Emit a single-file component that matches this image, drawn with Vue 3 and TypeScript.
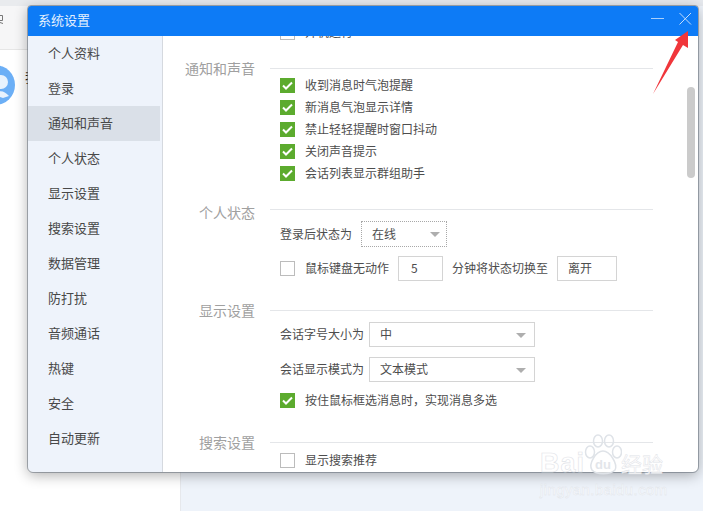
<script setup lang="ts">
const navItems: string[] = [
  '个人资料', '登录', '通知和声音', '个人状态', '显示设置', '搜索设置',
  '数据管理', '防打扰', '音频通话', '热键', '安全', '自动更新',
]
const activeNav = '通知和声音'

const notifyOptions: string[] = [
  '收到消息时气泡提醒',
  '新消息气泡显示详情',
  '禁止轻轻提醒时窗口抖动',
  '关闭声音提示',
  '会话列表显示群组助手',
]
</script>

<template>
  <div class="page">
    <!-- 背后的主窗口 -->
    <div class="back-left">
      <div class="back-top"></div>
      <div class="back-search">
        <svg class="back-search-icon" width="4" height="10" viewBox="0 0 4 10">
          <path d="M0 1.5H2.5V6.5H0M0 8.5L3 9.5" stroke="#777" stroke-width="1" fill="none" />
        </svg>
      </div>
      <div class="back-contact">
        <svg class="back-avatar" width="20" height="40" viewBox="0 0 20 40">
          <circle cx="-5" cy="20" r="20" fill="#6caff6" />
          <circle cx="1" cy="17" r="7" fill="#e8f2fd" />
          <path d="M-6 30 Q1 22 9 31 L3 33 Z" fill="#e8f2fd" />
        </svg>
        <span class="back-name">我</span>
      </div>
    </div>
    <div class="back-right">
      <div class="back-right-top"></div>
    </div>

    <!-- 系统设置窗口 -->
    <div class="window">
      <div class="titlebar">
        <span class="title">系统设置</span>
        <svg class="title-icons" width="42" height="14" viewBox="0 0 42 14">
          <path d="M0 6.5H13" stroke="#a9cffb" stroke-width="1" fill="none" />
          <path d="M28.5 1L40 12.5M40 1L28.5 12.5" stroke="#c3dcfb" stroke-width="1" fill="none" />
        </svg>
      </div>
      <div class="body">
        <aside class="sidebar">
          <div
            v-for="item in navItems"
            :key="item"
            class="nav-item"
            :class="{ active: item === activeNav }"
          >{{ item }}</div>
        </aside>
        <main class="content">
          <div class="scroll-inner">
            <label class="check-row">
              <span class="box"></span>
              <span class="txt">开机运行</span>
            </label>

            <section class="section sec-notify">
              <div class="sec-head">
                <span class="sec-label">通知和声音</span>
                <span class="sec-rule"></span>
              </div>
              <div class="rows tight">
                <label v-for="opt in notifyOptions" :key="opt" class="check-row">
                  <span class="box checked">
                    <svg width="11" height="9" viewBox="0 0 11 9">
                      <path d="M1 4.5L4 7.5L10 1.5" stroke="#fff" stroke-width="2" fill="none" />
                    </svg>
                  </span>
                  <span class="txt">{{ opt }}</span>
                </label>
              </div>
            </section>

            <section class="section sec-status">
              <div class="sec-head">
                <span class="sec-label">个人状态</span>
                <span class="sec-rule high"></span>
              </div>
              <div class="rows">
                <div class="form-row">
                  <span class="txt">登录后状态为</span>
                  <div class="select dotted small"><span class="txt">在线</span><i class="caret"></i></div>
                </div>
                <div class="form-row second">
                  <span class="box"></span>
                  <span class="txt box-text">鼠标键盘无动作</span>
                  <div class="input num"><span class="txt">5</span></div>
                  <span class="txt">分钟将状态切换至</span>
                  <div class="input away"><span class="txt">离开</span></div>
                </div>
              </div>
            </section>

            <section class="section sec-display">
              <div class="sec-head">
                <span class="sec-label">显示设置</span>
                <span class="sec-rule"></span>
              </div>
              <div class="rows">
                <div class="form-row tight-label">
                  <span class="txt">会话字号大小为</span>
                  <div class="select wide"><span class="txt">中</span><i class="caret"></i></div>
                </div>
                <div class="form-row tight-label second-wide">
                  <span class="txt">会话显示模式为</span>
                  <div class="select wide"><span class="txt">文本模式</span><i class="caret"></i></div>
                </div>
                <label class="check-row after-select">
                  <span class="box checked">
                    <svg width="11" height="9" viewBox="0 0 11 9">
                      <path d="M1 4.5L4 7.5L10 1.5" stroke="#fff" stroke-width="2" fill="none" />
                    </svg>
                  </span>
                  <span class="txt">按住鼠标框选消息时，实现消息多选</span>
                </label>
              </div>
            </section>

            <section class="section sec-search">
              <div class="sec-head">
                <span class="sec-label">搜索设置</span>
                <span class="sec-rule"></span>
              </div>
              <label class="check-row">
                <span class="box"></span>
                <span class="txt">显示搜索推荐</span>
              </label>
            </section>
          </div>
          <div class="scrollbar"></div>
        </main>
      </div>
    </div>

    <!-- 红色箭头标注 -->
    <svg class="arrow" width="40" height="66" viewBox="650 30 40 66">
      <polygon points="688,31 688,48 683,45 653,94 678,42 675,40" fill="#f0363b" />
    </svg>

    <!-- 水印 -->
    <div class="watermark">
      <div class="wm-top">
        <span class="wm-bai">Bai</span>
        <svg class="wm-paw" width="38" height="42" viewBox="0 0 38 42">
          <g fill="none" stroke="#dfe3e8" stroke-width="1.5">
            <ellipse cx="6" cy="18" rx="4.5" ry="6" />
            <ellipse cx="14" cy="7" rx="4.5" ry="6" />
            <ellipse cx="25" cy="7" rx="4.5" ry="6" />
            <ellipse cx="33" cy="18" rx="4.5" ry="6" />
            <path d="M19 17C12 17 4 30 8 36C12 41 26 41 31 36C34 30 26 17 19 17Z" fill="#fff" fill-opacity="0.6" />
          </g>
          <text x="19" y="35" text-anchor="middle" class="wm-du">du</text>
        </svg>
        <span class="wm-cn">经验</span>
      </div>
      <div class="wm-url">jingyan.baidu.com</div>
    </div>
  </div>
</template>

<style>
html,
body {
  margin: 0;
  padding: 0;
  background: #fff;
}
</style>

<style scoped>
.page {
  position: relative;
  display: flex;
  width: 703px;
  height: 511px;
  overflow: hidden;
  font-family: "Noto Sans CJK SC", "Liberation Sans", sans-serif;
  font-size: 12px;
  color: #4d4d4d;
}

/* 背后的主窗口 */
.back-left {
  width: 181px;
  background: #fff;
  border-right: 1px solid #e6e8ec;
  box-sizing: border-box;
}
.back-top {
  height: 6px;
  background: #e9ebee;
}
.back-search {
  height: 44px;
  background: #f6f6f7;
  border-bottom: 1px solid #e6e6e6;
  box-sizing: border-box;
}
.back-search-icon {
  display: block;
  padding-top: 8px;
}
.back-contact {
  display: flex;
  align-items: flex-start;
  padding-top: 15px;
}
.back-avatar {
  flex: none;
  width: 20px;
}
.back-name {
  margin: 2px 0 0 5px;
  font-size: 13px;
  color: #222;
}
.back-right {
  flex: 1;
  background: #eef3fa;
}
.back-right-top {
  height: 6px;
  background: #e6e9ee;
}

/* 设置窗口 */
.window {
  position: absolute;
  left: 28px;
  top: 6px;
  width: 670px;
  height: 466px;
  display: flex;
  flex-direction: column;
  background: #fff;
  border-radius: 3px 3px 5px 5px;
  overflow: hidden;
  outline: 1px solid rgba(100, 110, 120, 0.55);
  box-shadow: 0 3px 14px rgba(0, 0, 0, 0.32);
}
.titlebar {
  flex: none;
  height: 30px;
  background: #0d7bf6;
  display: flex;
  align-items: center;
  justify-content: space-between;
  padding: 0 5px 0 10px;
}
.title {
  margin-top: -4px;
  font-size: 13px;
  color: #e4f0fe;
}
.title-icons {
  margin-top: -5px;
}
.body {
  flex: 1;
  display: flex;
  min-height: 0;
}
.sidebar {
  flex: none;
  width: 135px;
  box-sizing: border-box;
  padding-right: 2px;
  background: #eef3fb;
  border-right: 1px solid #d5d9df;
}
.nav-item {
  height: 35px;
  line-height: 33px;
  padding-left: 20px;
  font-size: 13px;
  color: #484848;
}
.nav-item.active {
  background: #dae0e8;
}
.content {
  position: relative;
  flex: 1;
  overflow: hidden;
}
.scroll-inner {
  margin-top: -15px;
}
.scrollbar {
  position: absolute;
  top: 51px;
  right: 3px;
  width: 8px;
  height: 91px;
  border-radius: 4px;
  background: #cbcbcb;
}

.section {
  padding-right: 45px;
}
.sec-notify {
  margin-top: 20px;
}
.sec-status {
  margin-top: 23px;
}
.sec-display {
  margin-top: 24px;
}
.sec-search {
  margin-top: 26px;
}
.sec-head {
  display: flex;
  height: 12px;
}
.sec-label {
  flex: none;
  width: 92px;
  line-height: 10px;
  text-align: right;
  font-size: 14px;
  color: #a0a0a0;
}
.sec-rule {
  flex: 1;
  height: 1px;
  margin: 5px 0 0 15px;
  background: #e4e6e9;
}
.sec-rule.high {
  margin-top: 2px;
}

.rows {
  margin-top: 2px;
}
.rows.tight {
  margin-top: -1px;
}
.sec-display .rows {
  margin-top: 5px;
}
.txt {
  margin-top: -2px;
}
.check-row {
  display: flex;
  align-items: center;
  height: 22px;
  padding-left: 117px;
}
.box {
  flex: none;
  width: 15px;
  height: 15px;
  box-sizing: border-box;
  margin-right: 10px;
  border: 1px solid #bcbcbc;
  background: #fff;
  display: flex;
  align-items: center;
  justify-content: center;
}
.box.checked {
  background: #5cab2e;
  border-color: #5cab2e;
}
.form-row {
  display: flex;
  align-items: center;
  gap: 9px;
  height: 26px;
  padding-left: 117px;
}
.form-row.second {
  margin-top: 9px;
  height: 25px;
}
.form-row.tight-label {
  gap: 5px;
  height: 25px;
}
.form-row.second-wide {
  margin-top: 10px;
}
.box-text {
  margin-left: -9px;
}
.select {
  position: relative;
  box-sizing: border-box;
  height: 100%;
  display: flex;
  align-items: center;
  padding-left: 10px;
  border: 1px solid #d4d4d4;
  background: #fff;
}
.select.small {
  width: 86px;
}
.select.wide {
  width: 166px;
}
.select.dotted {
  border: 1px dotted #a8a8a8;
}
.caret {
  position: absolute;
  right: 6px;
  top: 10px;
  width: 0;
  height: 0;
  border-left: 5px solid transparent;
  border-right: 5px solid transparent;
  border-top: 5px solid #aeaeae;
}
.select.wide .caret {
  right: 8px;
}
.input {
  box-sizing: border-box;
  height: 25px;
  display: flex;
  align-items: center;
  border: 1px solid #d4d4d4;
  background: #fff;
}
.input.num {
  width: 45px;
  padding-left: 12px;
}
.input.away {
  width: 60px;
  padding-left: 10px;
}
.check-row.after-select {
  margin-top: 7px;
}

/* 标注 */
.arrow {
  position: absolute;
  left: 650px;
  top: 30px;
}
.watermark {
  position: absolute;
  left: 540px;
  top: 434px;
  width: 128px;
  pointer-events: none;
}
.wm-top {
  display: flex;
  align-items: flex-end;
  height: 42px;
}
.wm-bai {
  font-family: "Liberation Sans", sans-serif;
  font-size: 27px;
  font-weight: 700;
  line-height: 26px;
  letter-spacing: 1px;
  color: rgba(255, 255, 255, 0.85);
  -webkit-text-stroke: 0.6px #dfe3e8;
}
.wm-paw {
  flex: none;
  margin-left: -1px;
}
.wm-du {
  font-family: "Liberation Sans", sans-serif;
  font-size: 13px;
  font-weight: 700;
  fill: #e3e6ea;
}
.wm-cn {
  margin-left: -1px;
  font-size: 21px;
  line-height: 26px;
  white-space: nowrap;
  color: rgba(255, 255, 255, 0.85);
  -webkit-text-stroke: 0.5px #dfe3e8;
}
.wm-url {
  margin-top: 6px;
  font-family: "Liberation Sans", sans-serif;
  font-size: 15px;
  line-height: 16px;
  letter-spacing: 0.4px;
  white-space: nowrap;
  color: rgba(255, 255, 255, 0.8);
  -webkit-text-stroke: 0.4px #dde2e8;
}
</style>
